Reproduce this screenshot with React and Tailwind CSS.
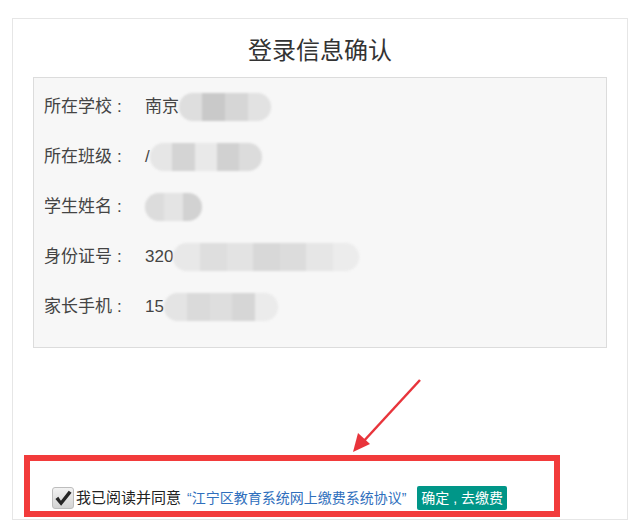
import React from "react";

const rows = [
  { label: "所在学校", value: "南京", blur: [182, 274], shades: ["#dedede", "#c9c9c9", "#d6d6d6", "#e2e2e2"] },
  { label: "所在班级", value: "/", blur: [150, 262], shades: ["#e6e6e6", "#d4d4d4", "#e9e9e9", "#d1d1d1", "#dcdcdc"] },
  { label: "学生姓名", value: "", blur: [143, 200], shades: ["#dcdcdc", "#e4e4e4", "#d2d2d2"] },
  { label: "身份证号", value: "320", blur: [174, 360], shades: ["#e8e8e8", "#dedede", "#e3e3e3", "#d8d8d8", "#dcdcdc", "#e6e6e6", "#ececec"] },
  { label: "家长手机", value: "15", blur: [166, 280], shades: ["#e4e4e4", "#dadada", "#dedede", "#d6d6d6", "#ebebeb"] },
];

function Blur({ shades, width }) {
  return (
    <div
      className="flex h-[28px] overflow-hidden rounded-full bg-[#ececec] blur-[1px]"
      style={{ width }}
    >
      {shades.map((c, i) => (
        <div key={i} className="h-full flex-1" style={{ backgroundColor: c }} />
      ))}
    </div>
  );
}

export default function App() {
  return (
    <div
      className="relative w-[631px] h-[524px] bg-white overflow-hidden text-[#333]"
      style={{ fontFamily: '"Liberation Sans", "Noto Sans CJK SC", sans-serif' }}
    >
      <div className="ml-[12px] mt-[18px] w-[616px] h-[502px] border border-[#e6e6e6] flex flex-col">
        <h1 className="text-center text-[24px] leading-[32px] mt-[16px] text-[#333]">
          登录信息确认
        </h1>

        <div className="mx-[20px] mt-[10px] h-[271px] border border-[#dcdcdc] bg-[#f7f7f7] pt-[4px]">
          {rows.map((r) => (
            <div key={r.label} className="h-[50px] flex items-center pl-[10px] text-[17px] text-[#444]">
              <span className="w-[101px] flex">
                <span>{r.label}</span>
                <span className="ml-[5px]">:</span>
              </span>
              <span>{r.value}</span>
              <Blur shades={r.shades} width={r.blur[1] - r.blur[0]} />
            </div>
          ))}
        </div>

        <div className="flex-1" />

        <div className="flex items-center ml-[39px] mb-[9px]">
          <div className="w-[22px] h-[22px] rounded-[3px] border border-[#bdbdbd] bg-gradient-to-b from-[#f2f2f2] to-[#d3d3d3] flex items-center justify-center">
            <svg viewBox="0 0 20 20" className="w-[19px] h-[19px]">
              <path d="M1.5 10.5 L7.5 17.5 L18.5 4 L15.5 1.8 L7.3 12.3 L4.5 8.2 Z" fill="#262626" />
            </svg>
          </div>
          <span className="text-[15px] ml-[2px] text-[#222]">我已阅读并同意</span>
          <span className="text-[14px] ml-[6px] text-[#2f6fbd]">“江宁区教育系统网上缴费系统协议”</span>
          <button className="ml-[11px] h-[24px] px-[4px] rounded-[2px] bg-[#009688] text-white text-[14px] leading-[24px]">
            确定 , 去缴费
          </button>
        </div>
      </div>

      <div className="absolute left-[24px] top-[455px] w-[536px] h-[62px] border-[6px] border-[#f23b3b]" />

      <svg className="absolute left-0 top-0 pointer-events-none" width="631" height="524">
        <line x1="420" y1="380" x2="362" y2="443" stroke="#e8343b" strokeWidth="2.5" />
        <polygon points="353,452 358,433 370,444" fill="#e8343b" />
      </svg>
    </div>
  );
}
